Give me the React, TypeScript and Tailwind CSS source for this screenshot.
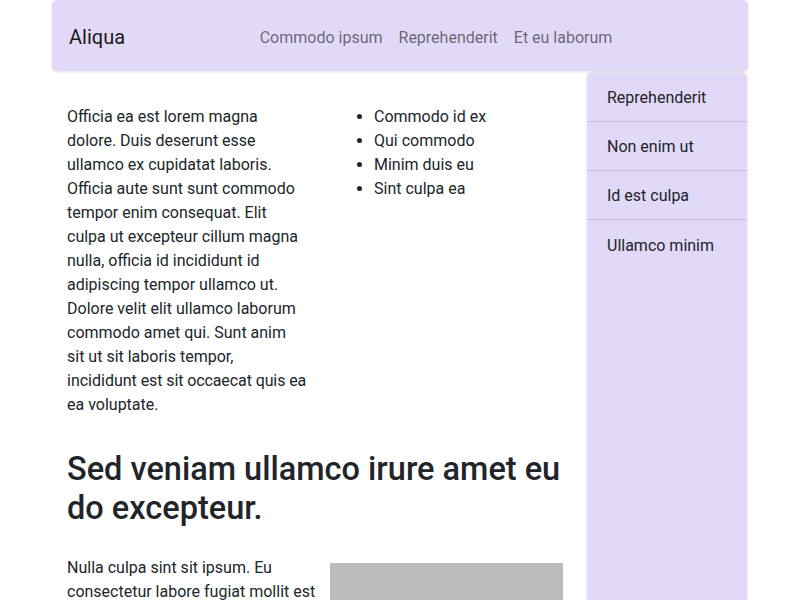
import React from "react";

const navLinks = ["Commodo ipsum", "Reprehenderit", "Et eu laborum"];
const sideItems = ["Reprehenderit", "Non enim ut", "Id est culpa", "Ullamco minim"];
const listItems = ["Commodo id ex", "Qui commodo", "Minim duis eu", "Sint culpa ea"];

export default function App() {
  return (
    <div className="h-screen overflow-hidden bg-white font-['Roboto',sans-serif] text-[16px] leading-[24px] text-[#212529]">
      <div className="mx-auto w-[696px]">
        <nav className="flex h-[71px] items-center rounded-[5px] bg-[#e2d8f7] px-[17px] pt-[3px] shadow-[0_1px_3px_rgba(0,0,0,0.12)]">
          <span className="mr-4 text-[20px] leading-[30px] text-[#1a1a1a]">Aliqua</span>
          <div className="flex flex-1 justify-center pt-[1px]">
            {navLinks.map((l) => (
              <a key={l} href="#" className="px-2 text-black/55">
                {l}
              </a>
            ))}
          </div>
        </nav>
        <div className="flex">
          <main className="w-[535px] pl-[15px] pr-[24px] pt-[34px]">
            <div className="flex">
              <p className="w-[240px] shrink-0">
                Officia ea est lorem magna dolore. Duis deserunt esse ullamco ex cupidatat laboris. Officia aute sunt
                sunt commodo tempor enim consequat. Elit culpa ut excepteur cillum magna nulla, officia id incididunt id
                adipiscing tempor ullamco ut. Dolore velit elit ullamco laborum commodo amet qui. Sunt anim sit ut sit
                laboris tempor, incididunt<span className="tracking-[-0.1px]"> est sit occaecat quis ea</span> ea
                voluptate.
              </p>
              <ul className="ml-[35px] list-disc pl-8">
                {listItems.map((i) => (
                  <li key={i}>{i}</li>
                ))}
              </ul>
            </div>
            <h2 className="mt-[33px] text-[32.5px] font-medium leading-[39px]">
              Sed veniam ullamco irure amet eu do excepteur.
            </h2>
            <div className="mt-[28px] flex">
              <p className="w-[250px]">
                Nulla culpa sint sit ipsum. Eu consectetur labore fugiat mollit est
              </p>
              <div className="ml-auto mt-[7px] h-[200px] w-[233px] bg-[#bbbbbb]" />
            </div>
          </main>
          <aside className="mt-[2px] h-[560px] w-[160px] rounded-t-[5px] bg-[#e2d8f7] shadow-[0_0_3px_rgba(0,0,0,0.15)]">
            {sideItems.map((s, i) => (
              <div
                key={s}
                className={
                  i < sideItems.length - 1
                    ? "flex h-[49px] items-center border-b border-[#c7badf] pl-[20px] pt-[2px]"
                    : "flex h-[49px] items-center pl-[20px] pt-[2px]"
                }
              >
                {s}
              </div>
            ))}
          </aside>
        </div>
      </div>
    </div>
  );
}
